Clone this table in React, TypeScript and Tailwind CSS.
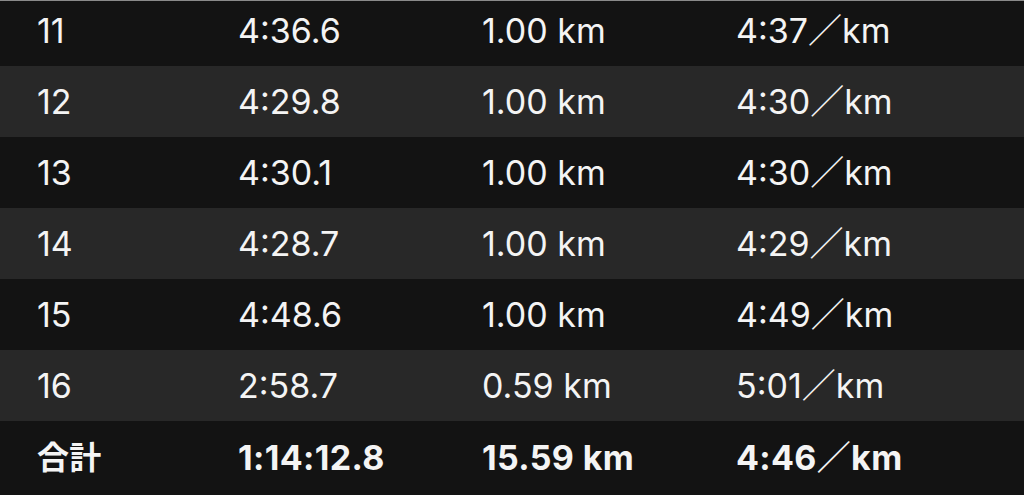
import React from "react";

const rows = [
  ["11", "4:36.6", "1.00 km", "4:37／km"],
  ["12", "4:29.8", "1.00 km", "4:30／km"],
  ["13", "4:30.1", "1.00 km", "4:30／km"],
  ["14", "4:28.7", "1.00 km", "4:29／km"],
  ["15", "4:48.6", "1.00 km", "4:49／km"],
  ["16", "2:58.7", "0.59 km", "5:01／km"],
];

function Cells({ r, first }: { r: string[]; first?: string }) {
  return (
    <>
      <div className={"w-[201px] shrink-0 " + (first ?? "")}>{r[0]}</div>
      <div className="w-[244px] shrink-0">{r[1]}</div>
      <div className="w-[254px] shrink-0">{r[2]}</div>
      <div className="shrink-0">{r[3]}</div>
    </>
  );
}

export default function App() {
  return (
    <div
      className="w-[1024px] h-[495px] overflow-hidden bg-[#131313] text-[#f4f4f4] text-[34px] leading-none"
      style={{ fontFamily: 'Inter, "Noto Sans CJK JP", sans-serif' }}
    >
      <div className="h-[1px] bg-[#8a8a8a]" />
      {rows.map((r, i) => (
        <div
          key={r[0]}
          className={
            (i % 2 === 0 ? "bg-[#131313] " : "bg-[#282828] ") +
            (i === 0 ? "h-[65px] pb-[5px] " : "h-[71px] ") +
            "flex items-center pl-[37px]"
          }
        >
          <Cells r={r} />
        </div>
      ))}
      <div className="h-[74px] flex items-center pl-[37px] font-bold tracking-[0.01em] bg-[#131313]">
        <Cells r={["合計", "1:14:12.8", "15.59 km", "4:46／km"]} first="text-[32px]" />
      </div>
    </div>
  );
}
